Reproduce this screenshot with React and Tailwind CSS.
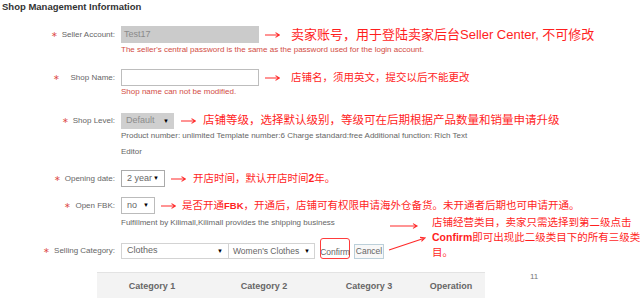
import React from "react";

function Arrow({ className }) {
  return (
    <svg width="15" height="6" viewBox="0 0 15 6" className={className}>
      <path d="M0 3H14.5M10.5 0.6L14.5 3L10.5 5.4" stroke="#ff2a2a" strokeWidth="1.1" fill="none" />
    </svg>
  );
}

function Label({ text, gap = "mr-[4px]" }) {
  return (
    <div className="w-[121px] shrink-0 pr-[6px] h-full flex items-center justify-end text-[8px] text-[#666]">
      <span className={`text-[#dd4b4b] text-[8px] ${gap}`}>∗</span>
      <span>{text}</span>
    </div>
  );
}

function Select({ value, className }) {
  return (
    <div className={`flex items-center justify-between whitespace-nowrap ${className}`}>
      <span>{value}</span>
      <span className="text-[6px] text-black">▼</span>
    </div>
  );
}

export default function App() {
  return (
    <div className="relative w-[640px] h-[298px] overflow-hidden bg-white font-['Liberation_Sans','Noto_Sans_CJK_SC',sans-serif]">
      {/* Title */}
      <div className="h-[14px] leading-[14px] pl-[2px] text-[9.5px] font-bold text-[#333]">
        Shop Management Information
      </div>

      {/* Seller Account */}
      <div className="mt-[12px] h-[17px] flex items-center">
        <Label text="Seller Account:" />
        <div className="w-[138px] h-[17px] bg-[#cbcbcb] pl-[3px] flex items-center text-[9px] text-[#8a8a8a]">
          Test17
        </div>
        <Arrow className="ml-[6px]" />
        <span className="ml-[11px] text-[13px] leading-none text-[#ff1e1e] whitespace-nowrap">
          卖家账号，用于登陆卖家后台Seller Center, 不可修改
        </span>
      </div>
      <div className="mt-[2px] pl-[121px] text-[8px] leading-[10px] text-[#d24d45] whitespace-nowrap">
        The seller's central password is the same as the password used for the login account.
      </div>

      {/* Shop Name */}
      <div className="mt-[14px] h-[17px] flex items-center">
        <Label text="Shop Name:" gap="mr-[11px]" />
        <div className="w-[138px] h-[17px] bg-white border border-[#bdbdbd]" />
        <Arrow className="ml-[6px]" />
        <span className="ml-[11px] text-[10.5px] leading-none text-[#ff1e1e] whitespace-nowrap">
          店铺名，须用英文，提交以后不能更改
        </span>
      </div>
      <div className="mt-[1px] pl-[121px] text-[8px] leading-[10px] text-[#d24d45]">
        Shop name can not be modified.
      </div>

      {/* Shop Level */}
      <div className="mt-[16px] h-[16px] flex items-center">
        <Label text="Shop Level:" />
        <Select value="Default" className="w-[53px] h-[16px] px-[5px] text-[9px] bg-[#cfcfcf] text-[#8c8c8c]" />
        <Arrow className="ml-[7px]" />
        <span className="ml-[7px] text-[11.5px] leading-none text-[#ff1e1e] whitespace-nowrap">
          店铺等级，选择默认级别，等级可在后期根据产品数量和销量申请升级
        </span>
      </div>
      <div className="mt-[-1px] pl-[121px] text-[8px] leading-[16px] text-[#666] whitespace-nowrap">
        Product number: unlimited Template number:6 Charge standard:free Additional function: Rich Text
        <br />
        Editor
      </div>

      {/* Opening date */}
      <div className="mt-[10px] h-[17px] flex items-center">
        <Label text="Opening date:" />
        <Select value="2 year" className="w-[44px] h-[17px] px-[5px] text-[9px] bg-white border border-[#aaa] text-[#666]" />
        <Arrow className="ml-[6px]" />
        <span className="ml-[7px] text-[10.5px] leading-none text-[#ff1e1e] whitespace-nowrap">
          开店时间，默认开店时间<b>2</b>年。
        </span>
      </div>

      {/* Open FBK */}
      <div className="mt-[10px] h-[17px] flex items-center">
        <Label text="Open FBK:" />
        <Select value="no" className="w-[34px] h-[17px] px-[5px] text-[9px] bg-white border border-[#bbb] text-[#666]" />
        <Arrow className="ml-[6px]" />
        <span className="ml-[6px] text-[10.5px] leading-none text-[#ff1e1e] whitespace-nowrap">
          是否开通<span className="font-semibold text-[9.5px]">FBK</span>，开通后，店铺可有权限申请海外仓备货。未开通者后期也可申请开通。
        </span>
      </div>
      <div className="mt-[4px] pl-[121px] text-[8px] leading-[10px] text-[#666] whitespace-nowrap">
        Fulfillment by Kilimall,Kilimall provides the shipping business
      </div>

      {/* Selling Category */}
      <div className="mt-[10px] h-[21px] flex items-end">
        <div className="h-[16px]">
          <Label text="Selling Category:" />
        </div>
        <Select value="Clothes" className="w-[108px] h-[16px] px-[5px] text-[9px] bg-white border border-[#d3d3d3] text-[#666]" />
        <Select value="Women's Clothes" className="w-[86px] h-[16px] px-[4px] text-[8.5px] bg-white border border-l-0 border-[#d3d3d3] text-[#666]" />
        <div className="ml-[5px] w-[30px] h-[21px] rounded-[3px] border border-[#ff3c3c] flex items-end justify-center pb-[2px] text-[8.5px] leading-none text-[#666]">
          Confirm
        </div>
        <div className="ml-[4px] w-[30px] h-[15px] border border-[#bcd0da] bg-[#f8f8f8] flex items-center justify-center text-[8.5px] text-[#666]">
          Cancel
        </div>
      </div>

      {/* Table header */}
      <div className="mt-[13px] ml-[97px] w-[388px] h-[30px] bg-[#f3f3f3] border-t border-[#e3e3e3] flex items-start text-[9px] font-bold text-[#666]">
        <div className="w-[110px] h-[28px] flex items-center justify-center">Category 1</div>
        <div className="w-[114px] h-[28px] flex items-center justify-center">Category 2</div>
        <div className="w-[96px] h-[28px] flex items-center justify-center">Category 3</div>
        <div className="w-[68px] h-[28px] flex items-center justify-center">Operation</div>
      </div>

      {/* Category annotation */}
      <svg width="45" height="35" viewBox="0 0 45 35" className="absolute left-[385px] top-[220px]">
        <path d="M5 6H32M28 3.6L32 6L28 8.4" stroke="#ff2a2a" strokeWidth="1.1" fill="none" />
        <path d="M4 30L40 18M35 17.4L40 18L36.4 21.4" stroke="#ff2a2a" strokeWidth="1.1" fill="none" />
      </svg>
      <div className="absolute left-[432px] top-[215px] text-[10.5px] leading-[15px] text-[#ff1e1e] whitespace-nowrap">
        店铺经营类目，卖家只需选择到第二级点击
        <br />
        <span className="font-semibold">Confirm</span>即可出现此二级类目下的所有三级类
        <br />
        目。
      </div>
      <div className="absolute left-[530px] top-[271px] text-[8px] text-[#777]">11</div>
    </div>
  );
}
